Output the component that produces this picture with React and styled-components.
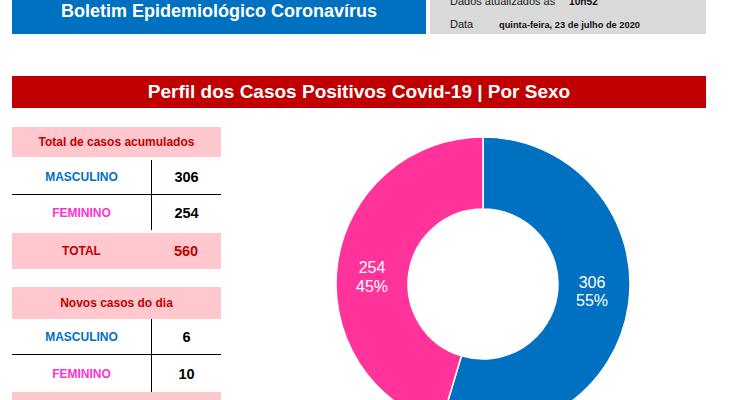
import React from "react";
import styled, { createGlobalStyle } from "styled-components";

const GlobalStyle = createGlobalStyle`
  body {
    margin: 0;
    background: #ffffff;
    font-family: "Liberation Sans", Arial, sans-serif;
    overflow: hidden;
  }
`;

const Page = styled.div`
  padding: 0 24px 0 12px;
`;

const TopRow = styled.div`
  display: flex;
  gap: 4px;
  height: 58px;
  margin-top: -24px;
`;

const Banner = styled.div`
  flex: 0 0 414px;
  background: #0070c0;
  color: #ffffff;
  font-weight: bold;
  font-size: 18px;
  display: flex;
  align-items: center;
  justify-content: center;
  padding-top: 12px;
  box-sizing: border-box;
`;

const InfoBox = styled.div`
  flex: 1;
  background: #d9d9d9;
  padding: 14px 0 0 20px;
  font-size: 11px;
  color: #1a1a1a;
`;

const InfoRow = styled.div`
  display: flex;
  align-items: baseline;
  line-height: 22px;
`;

const InfoLabel = styled.span`
  width: ${(p) => p.$w}px;
  flex: none;
`;

const InfoValue = styled.span`
  font-weight: bold;
  font-size: ${(p) => p.$size}px;
  color: #111;
`;

const SectionBar = styled.div`
  margin-top: 42px;
  height: 32px;
  background: #c00000;
  color: #ffffff;
  font-weight: bold;
  font-size: 19px;
  display: flex;
  align-items: center;
  justify-content: center;
`;

const Content = styled.div`
  display: flex;
  margin-top: 19px;
`;

const LeftCol = styled.div`
  flex: 0 0 209px;
  display: flex;
  flex-direction: column;
  gap: 18px;
`;

const TableHead = styled.div`
  height: ${(p) => p.$h}px;
  background: #ffc7ce;
  color: #c00000;
  font-weight: bold;
  font-size: 12px;
  display: flex;
  align-items: center;
  justify-content: center;
`;

const TableBody = styled.div`
  padding: ${(p) => p.$inset}px 0;
`;

const Row = styled.div`
  display: grid;
  grid-template-columns: 139px 1fr;
  height: ${(p) => p.$h}px;
  box-sizing: border-box;
  border-bottom: ${(p) => (p.$divider ? "1px solid #000" : "none")};
`;

const TotalRow = styled(Row)`
  background: #ffc7ce;
`;

const LabelCell = styled.div`
  display: flex;
  align-items: center;
  justify-content: center;
  font-weight: bold;
  font-size: 12px;
  color: ${(p) => p.$color};
`;

const ValueCell = styled.div`
  display: flex;
  align-items: center;
  justify-content: center;
  font-weight: bold;
  font-size: 14.5px;
  color: ${(p) => p.$color || "#000"};
  border-left: ${(p) => (p.$line ? "1px solid #000" : "none")};
`;

const ChartArea = styled.div`
  flex: 1;
  display: flex;
  justify-content: center;
  padding: 9px 0 0 39px;
`;

const BLUE = "#0070c0";
const PINK = "#ff3399";

const tables = [
  {
    title: "Total de casos acumulados",
    head: 30,
    inset: 3,
    rows: [35, 35],
    masc: 306,
    fem: 254,
    total: 560,
  },
  {
    title: "Novos casos do dia",
    head: 32,
    inset: 0,
    rows: [36, 37],
    masc: 6,
    fem: 10,
    total: 16,
  },
];

const CaseTable = ({ t }) => (
  <div>
    <TableHead $h={t.head}>{t.title}</TableHead>
    <TableBody $inset={t.inset}>
      <Row $h={t.rows[0]} $divider>
        <LabelCell $color="#0070c0">MASCULINO</LabelCell>
        <ValueCell $line>{t.masc}</ValueCell>
      </Row>
      <Row $h={t.rows[1]}>
        <LabelCell $color="#ff33cc">FEMININO</LabelCell>
        <ValueCell $line>{t.fem}</ValueCell>
      </Row>
    </TableBody>
    <TotalRow $h={36}>
      <LabelCell $color="#c00000">TOTAL</LabelCell>
      <ValueCell $color="#c00000">{t.total}</ValueCell>
    </TotalRow>
  </div>
);

const C = 148;
const R = 147;
const RI = 75;

const pt = (r, a) => [C + r * Math.sin(a), C - r * Math.cos(a)];

const arcPath = (a0, a1) => {
  const large = a1 - a0 > Math.PI ? 1 : 0;
  const [x0, y0] = pt(R, a0);
  const [x1, y1] = pt(R, a1);
  const [x2, y2] = pt(RI, a1);
  const [x3, y3] = pt(RI, a0);
  return `M${x0} ${y0} A${R} ${R} 0 ${large} 1 ${x1} ${y1} L${x2} ${y2} A${RI} ${RI} 0 ${large} 0 ${x3} ${y3} Z`;
};

const Donut = () => {
  const total = 560;
  const split = (306 / total) * Math.PI * 2;
  return (
    <svg width="296" height="296" viewBox="0 0 296 296">
      <path d={arcPath(0, split)} fill={BLUE} stroke="#fff" strokeWidth="1.5" />
      <path d={arcPath(split, Math.PI * 2)} fill={PINK} stroke="#fff" strokeWidth="1.5" />
      <g fill="#fff" fontSize="16" fontFamily="'Liberation Sans', Arial, sans-serif" textAnchor="middle">
        <text x="257" y="152">306</text>
        <text x="257" y="170">55%</text>
        <text x="37" y="137">254</text>
        <text x="37" y="156">45%</text>
      </g>
    </svg>
  );
};

export default function App() {
  return (
    <Page>
      <GlobalStyle />
      <TopRow>
        <Banner>Boletim Epidemiológico Coronavírus</Banner>
        <InfoBox>
          <InfoRow>
            <InfoLabel $w={119}>Dados atualizados às</InfoLabel>
            <InfoValue $size={10.2}>10h52</InfoValue>
          </InfoRow>
          <InfoRow>
            <InfoLabel $w={49}>Data</InfoLabel>
            <InfoValue $size={9.3}>quinta-feira, 23 de julho de 2020</InfoValue>
          </InfoRow>
        </InfoBox>
      </TopRow>
      <SectionBar>Perfil dos Casos Positivos Covid-19 | Por Sexo</SectionBar>
      <Content>
        <LeftCol>
          {tables.map((t) => (
            <CaseTable key={t.title} t={t} />
          ))}
        </LeftCol>
        <ChartArea>
          <Donut />
        </ChartArea>
      </Content>
    </Page>
  );
}
